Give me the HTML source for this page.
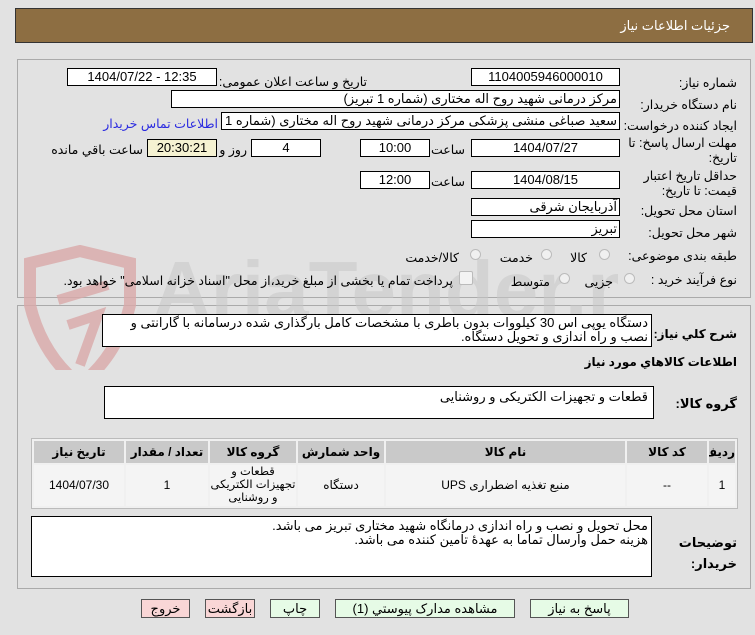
<!DOCTYPE html>
<html><head><meta charset="utf-8"><style>
body{margin:0;width:755px;height:635px;background:#e2e2e2;font-family:"Liberation Sans","DejaVu Sans",sans-serif;font-size:12.5px;color:#000;position:relative;overflow:hidden}
.a{position:absolute}
.box{position:absolute;background:#fff;border:1px solid #000;box-sizing:border-box;text-align:center;font-size:13px;line-height:16px;white-space:nowrap;overflow:hidden}
.lbl{position:absolute;direction:rtl;white-space:nowrap;font-size:12.5px}
.b{font-weight:bold;font-size:12px}
.r{position:absolute;width:11px;height:11px;border-radius:50%;border:1px solid #bbb;background:#f0f0f0;box-sizing:border-box}
table{border-collapse:separate;border-spacing:2px;background:#f0f0f0;table-layout:fixed}
td,th{font-size:12px;text-align:center;padding:0;overflow:hidden}
th{background:#c9c9c9;height:22px}
td{background:#f4f4f4;height:41px;line-height:13px}
.btn{position:absolute;top:599px;height:19px;border:1px solid #555;box-sizing:border-box;text-align:center;font-size:13px;line-height:17px;background:#e6fbe6}
</style></head><body>
<div class="a" style="left:15px;top:8px;width:738px;height:35px;background:#8d6e42;border:1px solid #333;box-sizing:border-box"></div>
<div class="lbl" style="right:25px;top:18px;color:#fff;font-size:13px">جزئیات اطلاعات نیاز</div>
<div class="a" style="left:17px;top:59px;width:734px;height:239px;border:1px solid #aaa;box-sizing:border-box"></div>
<div class="a" style="left:17px;top:305px;width:734px;height:284px;border:1px solid #aaa;box-sizing:border-box"></div>
<div class="a" style="left:18px;top:240px;width:600px;height:130px;overflow:hidden">
<svg class="a" style="left:0;top:5px" width="130" height="150"><path d="M12 18 L62 6 L112 18 L112 60 Q100 110 62 140 Q24 110 12 60 Z" fill="none" stroke="#d9a9a9" stroke-width="12" opacity=".8"/><path d="M40 55 L90 40 M50 80 L80 70 L62 120" stroke="#d9a9a9" stroke-width="10" fill="none" opacity=".8"/></svg>
<div class="a" style="left:135px;top:5px;font-size:80px;font-weight:bold;color:#c8c8c8;opacity:.55;line-height:90px;white-space:nowrap">AriaTender.net</div>
</div>

<div class="lbl" style="right:18px;top:75px">شماره نیاز:</div>
<div class="box" style="left:471px;top:68px;width:149px;height:18px">1104005946000010</div>
<div class="lbl" style="right:388px;top:74px">تاریخ و ساعت اعلان عمومی:</div>
<div class="box" style="left:67px;top:68px;width:150px;height:18px">1404/07/22 - 12:35</div>
<div class="lbl" style="right:18px;top:97px">نام دستگاه خریدار:</div>
<div class="box" style="left:171px;top:90px;width:449px;height:18px;text-align:right;direction:rtl;padding-right:2px">مرکز درمانی شهید روح اله مختاری (شماره 1 تبریز)</div>
<div class="lbl" style="right:18px;top:118px">ایجاد کننده درخواست:</div>
<div class="box" style="left:221px;top:112px;width:399px;height:18px;text-align:right;direction:rtl;padding-right:2px">سعید صباغی منشی  پزشکی مرکز درمانی شهید روح اله مختاری (شماره 1 تبریز)</div>
<div class="lbl" style="right:537px;top:116px;color:#2a2ae0">اطلاعات تماس خریدار</div>
<div class="lbl" style="right:18px;top:136px;line-height:15px;text-align:right">مهلت ارسال پاسخ: تا<br>تاریخ:</div>
<div class="box" style="left:471px;top:139px;width:149px;height:18px">1404/07/27</div>
<div class="lbl" style="right:290px;top:142px">ساعت</div>
<div class="box" style="left:360px;top:139px;width:70px;height:18px">10:00</div>
<div class="box" style="left:251px;top:139px;width:70px;height:18px">4</div>
<div class="lbl" style="right:508px;top:142px">روز و</div>
<div class="box" style="left:147px;top:139px;width:70px;height:18px;background:#f5f2d2">20:30:21</div>
<div class="lbl" style="right:612px;top:142px">ساعت باقي مانده</div>
<div class="lbl" style="right:18px;top:169px;line-height:15px;text-align:right">حداقل تاریخ اعتبار<br>قیمت: تا تاریخ:</div>
<div class="box" style="left:471px;top:171px;width:149px;height:18px">1404/08/15</div>
<div class="lbl" style="right:290px;top:174px">ساعت</div>
<div class="box" style="left:360px;top:171px;width:70px;height:18px">12:00</div>
<div class="lbl" style="right:18px;top:203px">استان محل تحویل:</div>
<div class="box" style="left:471px;top:198px;width:149px;height:18px;text-align:right;padding-right:2px">آذربایجان شرقی</div>
<div class="lbl" style="right:18px;top:225px">شهر محل تحویل:</div>
<div class="box" style="left:471px;top:220px;width:149px;height:18px;text-align:right;padding-right:2px">تبریز</div>
<div class="lbl" style="right:18px;top:248px">طبقه بندی موضوعی:</div>
<div class="r" style="left:599px;top:249px"></div><div class="lbl" style="right:168px;top:250px">کالا</div>
<div class="r" style="left:541px;top:249px"></div><div class="lbl" style="right:222px;top:250px">خدمت</div>
<div class="r" style="left:470px;top:249px"></div><div class="lbl" style="right:296px;top:250px">کالا/خدمت</div>
<div class="lbl" style="right:18px;top:272px">نوع فرآیند خرید :</div>
<div class="r" style="left:624px;top:273px"></div><div class="lbl" style="right:142px;top:274px">جزیی</div>
<div class="r" style="left:559px;top:273px"></div><div class="lbl" style="right:205px;top:274px">متوسط</div>
<div class="a" style="left:459px;top:271px;width:12px;height:12px;border:1px solid #bbb;background:#f3f3f3;border-radius:2px"></div>
<div class="lbl" style="right:302px;top:273px">پرداخت تمام یا بخشی از مبلغ خرید،از محل "اسناد خزانه اسلامی" خواهد بود.</div>

<div class="lbl b" style="right:18px;top:327px">شرح کلي نياز:</div>
<div class="box" style="left:102px;top:314px;width:550px;height:33px;text-align:right;direction:rtl;white-space:normal;padding:1px 3px;line-height:14px">دستگاه یوپی اس 30 کیلووات بدون باطری با مشخصات کامل بارگذاری شده درسامانه با گارانتی و نصب و راه اندازی و تحویل دستگاه.</div>
<div class="lbl b" style="right:18px;top:355px">اطلاعات کالاهاي مورد نياز</div>
<div class="lbl b" style="right:18px;top:396px;font-size:13px">گروه کالا:</div>
<div class="box" style="left:104px;top:386px;width:550px;height:33px;text-align:right;padding:2px 5px">قطعات و تجهیزات الکتریکی و روشنایی</div>
<table class="a" style="left:31px;top:438px;width:707px;direction:rtl;border:1px solid #bbb;box-sizing:border-box">
<tr><th style="width:26px">ردیف</th><th style="width:80px">کد کالا</th><th>نام کالا</th><th style="width:86px">واحد شمارش</th><th style="width:86px">گروه کالا</th><th style="width:82px">تعداد / مقدار</th><th style="width:90px">تاریخ نیاز</th></tr>
<tr><td>1</td><td>--</td><td>منبع تغذیه اضطراری UPS</td><td>دستگاه</td><td style="font-size:11.5px">قطعات و تجهیزات الکتریکی و روشنایی</td><td>1</td><td>1404/07/30</td></tr>
</table>
<div class="lbl b" style="right:18px;top:532px;line-height:21px;text-align:right;font-size:13px">توضیحات<br>خریدار:</div>
<div class="box" style="left:31px;top:516px;width:621px;height:61px;text-align:right;direction:rtl;padding:2px 3px;line-height:14px;white-space:normal">محل تحویل و نصب و راه اندازی درمانگاه شهید مختاری تبریز می باشد.<br>هزینه حمل وارسال تماما به عهدۀ تامین کننده می باشد.</div>

<div class="btn" style="left:141px;width:49px;background:#f9d6d6">خروج</div>
<div class="btn" style="left:205px;width:50px;background:#f9d6d6">بازگشت</div>
<div class="btn" style="left:270px;width:50px">چاپ</div>
<div class="btn" style="left:335px;width:180px">مشاهده مدارک پیوستي (1)</div>
<div class="btn" style="left:530px;width:99px">پاسخ به نیاز</div>
</body></html>
